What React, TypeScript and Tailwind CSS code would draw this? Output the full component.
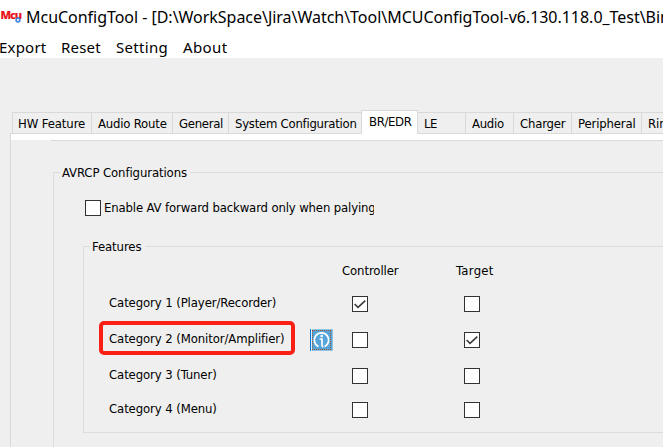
import React from "react";

const tabs = [
  { label: "HW Feature", box: "w-[79px] pl-[5px]", text: "tracking-[-0.1px]" },
  { label: "Audio Route", box: "w-[81px] pl-[6px]", text: "tracking-[-0.2px]" },
  { label: "General", box: "w-[56px] pl-[6px]", text: "tracking-[-0.3px]" },
  { label: "System Configuration", box: "w-[134px] pl-[6px]", text: "tracking-[-0.25px]" },
  { label: "BR/EDR", box: "", text: "", active: true },
  { label: "LE", box: "w-[48px] pl-[6px]", text: "tracking-[-0.4px]" },
  { label: "Audio", box: "w-[48px] pl-[6px]", text: "tracking-[-0.3px]" },
  { label: "Charger", box: "w-[58px] pl-[6px]", text: "tracking-[-0.2px]" },
  { label: "Peripheral", box: "w-[70px] pl-[6px]", text: "tracking-[-0.15px]" },
  { label: "Ringtone", box: "w-[22px] overflow-hidden pl-[6px]", text: "" },
];

const rows = [
  { label: "Category 1 (Player/Recorder)", controller: true, target: false, row: "h-[36px]" },
  { label: "Category 2 (Monitor/Amplifier)", controller: false, target: true, row: "h-[36px]", marked: true },
  { label: "Category 3 (Tuner)", controller: false, target: false, row: "h-[34px]" },
  { label: "Category 4 (Menu)", controller: false, target: false, row: "h-[30px]" },
];

function CheckBox({ checked = false }: { checked?: boolean }) {
  return (
    <span className="block h-4 w-4 shrink-0 border border-[#333] bg-white">
      {checked && (
        <svg viewBox="0 0 14 14" className="block h-[14px] w-[14px]" fill="none" stroke="#3c3c3c" strokeWidth="1.6">
          <path d="M1.6 7 L5 10.4 L12.3 3.6" />
        </svg>
      )}
    </span>
  );
}

function InfoButton() {
  return (
    <svg viewBox="0 0 23 22" className="block h-[22px] w-[23px]">
      <rect width="23" height="22" fill="#8fc3e6" />
      <rect width="1" height="22" fill="#0078d7" />
      <rect x="1" width="1" height="22" fill="#e4f1fa" />
      <rect x="2" y="1" width="20" height="20" fill="#55a4da" />
      <path
        d="M2 1.5 H21 M2 20.5 H21 M2.5 2 V20 M20.5 2 V20"
        fill="none"
        stroke="#a0592c"
        strokeDasharray="1 1"
        shapeRendering="crispEdges"
      />
      <path d="M8.4 17.6 A7.2 7.2 0 1 1 14.6 17.6" fill="none" stroke="#fff" strokeWidth="1.8" />
      <circle cx="11.7" cy="7" r="1.3" fill="#fff" />
      <path d="M9.6 10 H12 V16.4 Q12 17.6 13.4 17.6" fill="none" stroke="#fff" strokeWidth="1.7" />
    </svg>
  );
}

function AppIcon() {
  return (
    <span className="relative block h-[22px] w-[21px] shrink-0">
      <span className="absolute left-[0.5px] top-[1px] font-['Open_Sans',sans-serif] text-[11px] font-extrabold leading-[16px] tracking-[-1.1px] text-[#e8141c]">
        Mcu
      </span>
      <svg viewBox="0 0 6 6" className="absolute left-[15px] top-[11px] h-[6px] w-[6px]">
        <circle cx="3" cy="3" r="1.9" fill="#fff" stroke="#4285dc" strokeWidth="1.6" />
      </svg>
    </span>
  );
}

export default function App() {
  return (
    <div className="h-[447px] w-[663px] overflow-hidden whitespace-nowrap bg-[#efefef] font-['DejaVu_Sans_Condensed','DejaVu_Sans',sans-serif] text-[13px] tracking-[-0.1px] text-black">
      <header className="h-[58px] bg-white font-['Noto_Sans',sans-serif] text-[16px] tracking-normal">
        <div className="flex h-[33px] items-center">
          <AppIcon />
          <h1 className="ml-[5px] shrink-0 font-normal tracking-[-0.03px]">
            McuConfigTool - [D:\WorkSpace\Jira\Watch\Tool\MCUConfigTool-v6.130.118.0_Test\Bin
          </h1>
        </div>
        <nav className="-ml-px flex h-[29px] items-center text-[15px]">
          <span className="w-[62px] tracking-[0.2px]">Export</span>
          <span className="w-[55px] tracking-[0.2px]">Reset</span>
          <span className="w-[67px] tracking-[0.3px]">Setting</span>
          <span className="tracking-[0.4px]">About</span>
        </nav>
      </header>

      <div className="ml-[12px] mt-[52px] flex h-[24px] items-end">
        {tabs.map((t, i) =>
          t.active ? (
            <div key={t.label + i} className="z-10 -ml-px h-[24px] w-[57px] shrink-0 border border-b-0 border-[#d9d9d9] bg-white pl-[7px] leading-[22px] tracking-[-0.35px]">
              {t.label}
            </div>
          ) : (
            <div key={t.label + i} className={`h-[22px] shrink-0 border-l border-t border-[#d9d9d9] leading-[22px] ${i === 5 ? "-ml-px" : ""} ${t.box}`}>
              <span className={t.text}>{t.label}</span>
            </div>
          ),
        )}
      </div>

      <main className="-mt-px ml-[10px] h-[320px] border-l border-t border-[#d9d9d9]">
        <div className="h-[6px] bg-white" />
        <div className="ml-[40px] border-t border-[#d9d9d9]" />

        <section className="ml-[42px] mt-[31px] h-[300px] border-l border-t border-[#dcdcdc]">
          <h2 className="-mt-[10px] ml-[6px] w-[130px] bg-[#efefef] pl-[2px] leading-[20px]">AVRCP Configurations</h2>
          <div className="ml-[31px] mt-[17px] flex h-[16px] items-center">
            <CheckBox />
            <span className="ml-[3px] w-[270px] overflow-hidden leading-[18px] tracking-[-0.14px]">
              Enable AV forward backward only when palying
            </span>
          </div>

          <section className="ml-[29px] mt-[30px] h-[187px] border-b border-l border-t border-[#dcdcdc]">
            <h3 className="-mt-[10px] ml-[6px] w-[55px] bg-[#efefef] pl-[2px] leading-[20px]">Features</h3>
            <div className="mt-[4px] flex h-[20px] pl-[258px] leading-[20px]">
              <span className="w-[114px]">Controller</span>
              <span className="tracking-[0.3px]">Target</span>
            </div>
            <div className="mt-[7px]">
              {rows.map((r) => (
                <div key={r.label} className={`flex items-start ${r.row}`}>
                  <div
                    className={
                      r.marked
                        ? "-mt-[3px] ml-[15px] h-[34px] w-[196px] rounded-[5px] border-[4px] border-[#fb2016] pl-[6px] leading-[27px]"
                        : "ml-[25px] mt-[5px] w-[186px] leading-[20px]"
                    }
                  >
                    {r.label}
                  </div>
                  <div className="ml-[15px] w-[42px] pt-[5px]">{r.marked && <InfoButton />}</div>
                  <div className="w-[112px] pt-[8px]">
                    <CheckBox checked={r.controller} />
                  </div>
                  <div className="pt-[8px]">
                    <CheckBox checked={r.target} />
                  </div>
                </div>
              ))}
            </div>
          </section>
        </section>
      </main>
    </div>
  );
}
